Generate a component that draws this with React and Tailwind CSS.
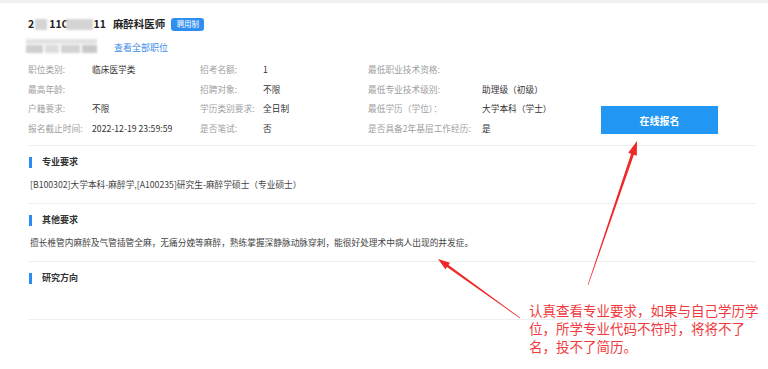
import React from 'react';

const rows = [
  ['职位类别:', '临床医学类', '招考名额:', '1', '最低职业技术资格:', ''],
  ['最高年龄:', '', '招聘对象:', '不限', '最低专业技术级别:', '助理级（初级）'],
  ['户籍要求:', '不限', '学历类别要求:', '全日制', '最低学历（学位）：', '大学本科（学士）'],
  ['报名截止时间:', '2022-12-19 23:59:59', '是否笔试:', '否', '是否具备2年基层工作经历:', '是'],
];

function Blur({ className }) {
  return <div className={'bg-[#d4d4d4] blur-[1.2px] ' + className} />;
}

function Section({ title, children, tall }) {
  return (
    <div className="border-t border-[#eeeeee] pt-[10px] pb-[12px]">
      <div className="flex items-center h-[12px]">
        <div className="w-[3px] h-[11px] bg-[#2d8cf0] ml-[1px]" />
        <span className="ml-[10px] text-[9px] font-bold text-[#333]">{title}</span>
      </div>
      {tall ? (
        <div className="h-[23px]" />
      ) : (
        <div className="mt-[11px] h-[12px] flex items-center pl-[2px] text-[8.7px] text-[#444] whitespace-nowrap">
          {children}
        </div>
      )}
    </div>
  );
}

export default function App() {
  return (
    <div className="relative w-[768px] h-[369px] bg-white overflow-hidden font-['Noto_Sans_CJK_SC','Noto_Sans',sans-serif]">
      <div className="h-[3px] bg-[#f1f1f1]" />

      <div className="pl-[28px] w-[756px]">
        {/* title */}
        <div className="mt-[13px] h-[16px] flex items-center text-[10.5px] font-bold text-[#222]">
          <span>2</span>
          <Blur className="w-[12px] h-[11px] ml-[1px]" />
          <span className="ml-[2px]">11C</span>
          <Blur className="w-[27px] h-[11px] -ml-[2px]" />
          <span>11</span>
          <span className="ml-[7px]">麻醉科医师</span>
          <span className="ml-[6px] h-[13px] w-[33px] rounded-[3px] bg-[#2f8ef0] text-white text-[7.5px] font-normal flex items-center justify-center">
            聘用制
          </span>
        </div>

        {/* unit + link */}
        <div className="mt-[7px] h-[14px] flex items-center">
          <div className="w-[71px] h-[14px] -ml-[2px] flex flex-col gap-[1px] blur-[1.2px]">
            <div className="h-[5px] bg-[#e2e2e2]" />
            <div className="h-[8px] flex gap-[2px]">
              <div className="w-[18px] bg-[#cfcfcf]" />
              <div className="w-[14px] bg-[#dcdcdc]" />
              <div className="w-[20px] bg-[#d2d2d2]" />
              <div className="w-[15px] bg-[#c9c9c9]" />
            </div>
          </div>
          <span className="ml-[17px] mt-[3px] text-[9px] text-[#3d8ee8]">查看全部职位</span>
        </div>

        {/* info grid + button */}
        <div className="mt-[7px] flex items-end">
          <div className="grid grid-cols-[64px_108px_63px_105px_114px_90px] auto-rows-[19.5px] items-center text-[8.7px] whitespace-nowrap">
            {rows.map((r, i) => (
              <React.Fragment key={i}>
                <span className="text-[#a0a0a0]">{r[0]}</span>
                <span className="text-[#333]">{r[1]}</span>
                <span className="text-[#a0a0a0]">{r[2]}</span>
                <span className="text-[#333]">{r[3]}</span>
                <span className="text-[#a0a0a0]">{r[4]}</span>
                <span className="text-[#333]">{r[5]}</span>
              </React.Fragment>
            ))}
          </div>
          <button className="ml-[29px] mb-[4px] w-[117px] h-[28px] bg-[#2196f3] text-white text-[10px] font-bold">
            在线报名
          </button>
        </div>

        <div className="mt-[7px]">
          <Section title="专业要求">
            [B100302]大学本科-麻醉学,[A100235]研究生-麻醉学硕士（专业硕士）
          </Section>
          <Section title="其他要求">
            擅长椎管内麻醉及气管插管全麻，无痛分娩等麻醉，熟练掌握深静脉动脉穿刺，能很好处理术中病人出现的并发症。
          </Section>
          <Section title="研究方向" tall />
          <div className="border-t border-[#eeeeee]" />
        </div>
      </div>

      {/* annotation arrows */}
      <svg className="absolute left-0 top-0" width="768" height="369" viewBox="0 0 768 369">
        <polygon
          fill="#f02828"
          points="588.3,285.1 633.9,154.8 636.8,155.75 637,141 628.2,152.85 631.1,153.8 587.7,284.9"
        />
        <polygon
          fill="#f02828"
          points="520.2,317.8 448.5,264.9 450,262.8 438,259 445.4,269.3 446.9,267.1 519.8,318.2"
        />
      </svg>

      <div className="absolute left-[529px] top-[301px] text-[13.5px] leading-[18px] text-[#f03a40] whitespace-nowrap">
        <div className="h-[18px]">认真查看专业要求，如果与自己学历学</div>
        <div className="h-[18px]">位，所学专业代码不符时，将将不了</div>
        <div className="h-[18px]">名，投不了简历。</div>
      </div>
    </div>
  );
}
